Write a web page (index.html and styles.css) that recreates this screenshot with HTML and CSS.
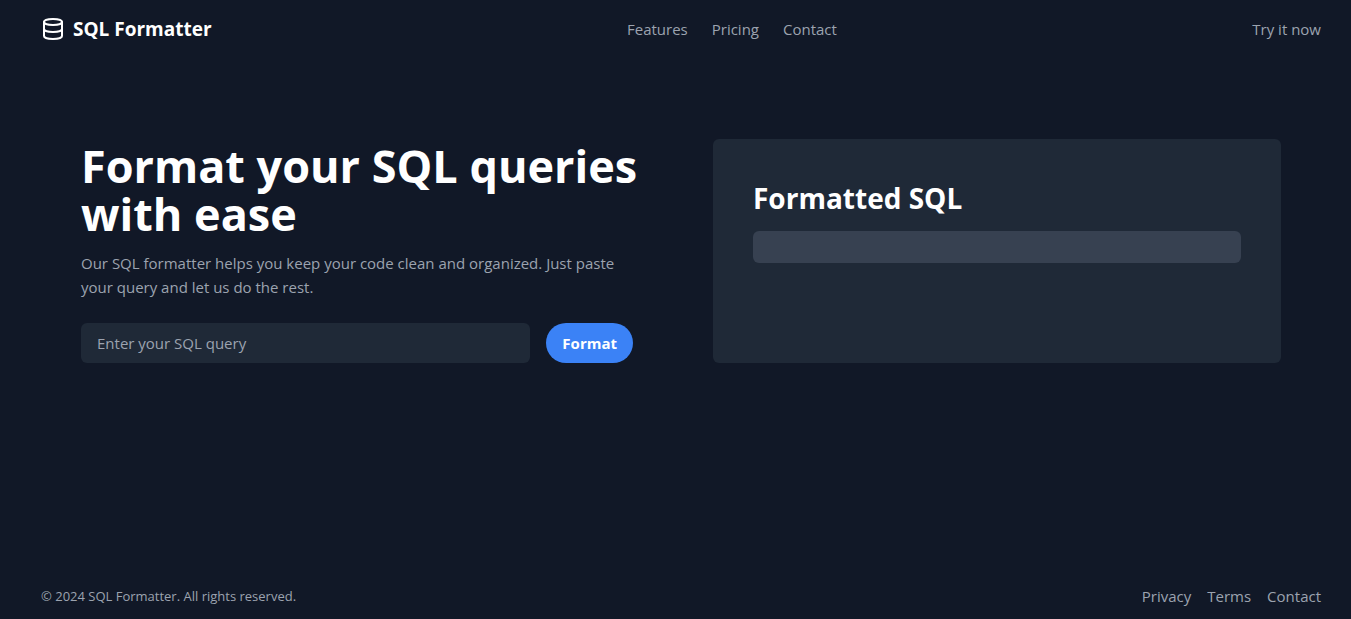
FILE: index.html
```html
<!DOCTYPE html>
<html lang="en">
<head>
<meta charset="utf-8">
<meta name="viewport" content="width=device-width, initial-scale=1">
<title>SQL Formatter</title>
<link rel="stylesheet" href="styles.css">
</head>
<body>
<header class="header">
  <a class="brand" href="#">
    <svg class="brand-icon" viewBox="0 0 24 24" aria-hidden="true">
      <ellipse cx="12" cy="5" rx="9" ry="3"/>
      <path d="M3 5v14c0 1.66 4 3 9 3s9-1.34 9-3V5"/>
      <path d="M3 12c0 1.66 4 3 9 3s9-1.34 9-3"/>
    </svg>
    <span>SQL Formatter</span>
  </a>
  <nav class="nav">
    <a href="#">Features</a>
    <a href="#">Pricing</a>
    <a href="#">Contact</a>
  </nav>
  <a class="try" href="#">Try it now</a>
</header>
<main class="main">
  <section class="intro">
    <h1 class="title">Format your SQL queries with ease</h1>
    <p class="lead">Our SQL formatter helps you keep your code clean and organized. Just paste your query and let us do the rest.</p>
    <form class="form">
      <input class="query" type="text" placeholder="Enter your SQL query" aria-label="Enter your SQL query">
      <button class="submit" type="button">Format</button>
    </form>
  </section>
  <section class="card">
    <h2 class="card-title">Formatted SQL</h2>
    <pre class="output"></pre>
  </section>
</main>
<footer class="footer">
  <p class="copyright">© 2024 SQL Formatter. All rights reserved.</p>
  <nav class="footer-nav">
    <a href="#">Privacy</a>
    <a href="#">Terms</a>
    <a href="#">Contact</a>
  </nav>
</footer>
</body>
</html>
```
FILE: styles.css
```css
*, *::before, *::after {
  box-sizing: border-box;
}

body {
  margin: 0;
  min-height: 100vh;
  display: flex;
  flex-direction: column;
  background: #111827;
  color: #9ca3af;
  font-family: "Segoe UI", "Open Sans", "Noto Sans", sans-serif;
  font-size: 15px;
  line-height: 24px;
}

h1, h2, p, pre {
  margin: 0;
}

a {
  color: inherit;
  text-decoration: none;
}

.header {
  display: flex;
  align-items: center;
  justify-content: space-between;
  padding: 15px 30px 16px 41px;
}

.brand {
  display: flex;
  align-items: center;
  gap: 8px;
  color: #fff;
  font-size: 19px;
  font-weight: 700;
  line-height: 28px;
}

.brand-icon {
  width: 24px;
  height: 24px;
  fill: none;
  stroke: currentColor;
  stroke-width: 2;
  stroke-linecap: round;
  stroke-linejoin: round;
}

.nav {
  display: flex;
  gap: 24px;
}

.main {
  flex: 1;
  display: grid;
  grid-template-columns: 1fr 1fr;
  align-content: start;
  gap: 64px;
  padding: 80px 70px 40px 81px;
}

.title {
  padding-top: 3px;
  margin-bottom: 13px;
  color: #fff;
  font-size: 45px;
  font-weight: 700;
  line-height: 48px;
}

.lead {
  margin-bottom: 24px;
}

.form {
  display: flex;
  gap: 16px;
  padding-right: 16px;
}

.query {
  flex: 1;
  min-width: 0;
  padding: 8px 16px;
  border: 0;
  border-radius: 6px;
  background: #1f2937;
  color: #fff;
  font: inherit;
}

.query::placeholder {
  color: #9ca3af;
  opacity: 1;
}

.submit {
  padding: 8px 16px;
  border: 0;
  border-radius: 20px;
  background: #3b82f6;
  color: #fff;
  font: inherit;
  font-weight: 700;
}

.card {
  padding: 40px;
  border-radius: 6px;
  background: #1f2937;
}

.card-title {
  margin-bottom: 14px;
  color: #fff;
  font-size: 28px;
  font-weight: 700;
  line-height: 38px;
}

.output {
  min-height: 32px;
  padding: 16px;
  border-radius: 6px;
  background: #374151;
}

.footer {
  display: flex;
  align-items: center;
  justify-content: space-between;
  padding: 16px 30px 11px 41px;
}

.copyright {
  font-size: 13px;
  line-height: 20px;
}

.footer-nav {
  display: flex;
  gap: 16px;
}
```
